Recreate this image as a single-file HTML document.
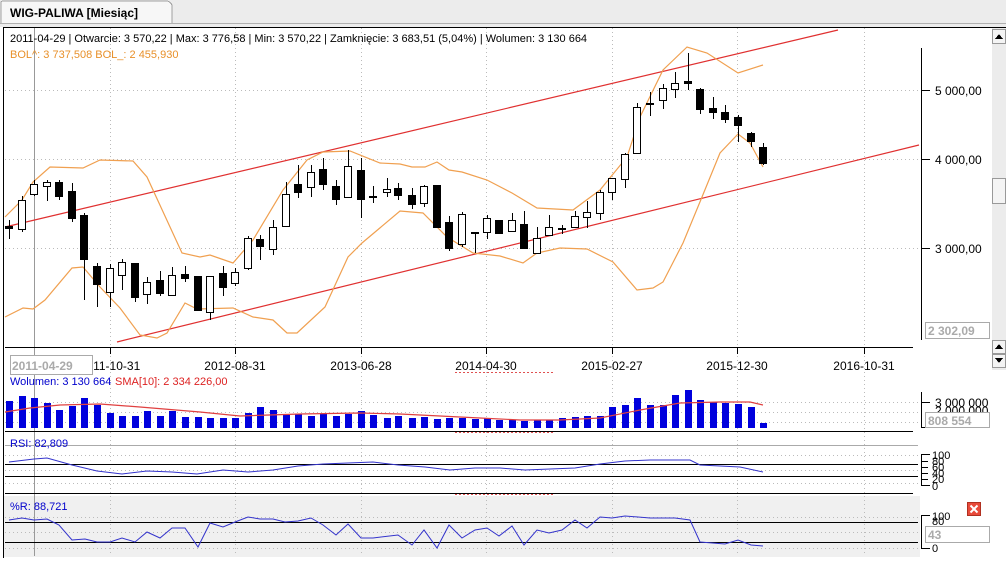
<!DOCTYPE html>
<html><head><meta charset="utf-8"><style>
body{margin:0;width:1006px;height:558px;overflow:hidden;background:#fff;font-family:"Liberation Sans",sans-serif;}
svg text{font-family:"Liberation Sans",sans-serif;}
</style></head><body>
<svg width="1006" height="558" xmlns="http://www.w3.org/2000/svg" shape-rendering="crispEdges">
<rect x="0" y="0" width="1006" height="27" fill="#ececec"/>
<path d="M1 23 V3 Q1 1 3 1 H166 Q170 1 172 5 V23" fill="#f7f7f7" stroke="#a0a0a0"/>
<text x="10" y="17" font-size="12" font-weight="bold" fill="#000">WIG-PALIWA [Miesiąc]</text>
<line x1="0" y1="23.5" x2="1006" y2="23.5" stroke="#b0b0b0"/>
<rect x="3.5" y="27.5" width="1010" height="540" fill="#fff" stroke="#000"/>
<rect x="4" y="496" width="916" height="61" fill="#f0f0f0"/>
<rect x="992" y="28" width="14" height="342" fill="#ececec"/>
<rect x="992.5" y="29.5" width="13" height="14" fill="#f4f4f4" stroke="#999"/>
<path d="M995 39 L999 34 L1003 39Z" fill="#000"/>
<rect x="992.5" y="178.5" width="13" height="25" fill="#f4f4f4" stroke="#999"/>
<rect x="992.5" y="340.5" width="13" height="13" fill="#f4f4f4" stroke="#999"/>
<path d="M995 349 L999 344 L1003 349Z" fill="#000"/>
<rect x="992.5" y="354.5" width="13" height="13" fill="#f4f4f4" stroke="#999"/>
<path d="M995 358 L999 363 L1003 358Z" fill="#000"/>
<g stroke="#bbb" stroke-dasharray="1,3" shape-rendering="crispEdges">
<line x1="5" y1="90.5" x2="918" y2="90.5"/><line x1="5" y1="159.5" x2="918" y2="159.5"/><line x1="5" y1="248.5" x2="918" y2="248.5"/>
<line x1="110.5" y1="28" x2="110.5" y2="556"/><line x1="235.5" y1="28" x2="235.5" y2="556"/><line x1="361.5" y1="28" x2="361.5" y2="556"/><line x1="486.5" y1="28" x2="486.5" y2="556"/><line x1="612.5" y1="28" x2="612.5" y2="556"/><line x1="737.5" y1="28" x2="737.5" y2="556"/><line x1="864.5" y1="28" x2="864.5" y2="556"/>
<line x1="5" y1="402.5" x2="918" y2="402.5"/><line x1="5" y1="412.5" x2="918" y2="412.5"/><line x1="5" y1="422.5" x2="918" y2="422.5"/>
<line x1="5" y1="455.5" x2="918" y2="455.5"/><line x1="5" y1="470.5" x2="918" y2="470.5"/><line x1="5" y1="483.5" x2="918" y2="483.5"/>
<line x1="5" y1="517.5" x2="918" y2="517.5"/><line x1="5" y1="532.5" x2="918" y2="532.5"/><line x1="5" y1="548.5" x2="918" y2="548.5"/>
</g>
<g stroke="#e05050" stroke-dasharray="2,2"><line x1="455" y1="372.5" x2="555" y2="372.5"/><line x1="455" y1="432.5" x2="555" y2="432.5"/><line x1="455" y1="494.5" x2="555" y2="494.5"/></g>
<line x1="34.5" y1="28" x2="34.5" y2="556" stroke="#999"/>
<text x="10" y="42" font-size="11" fill="#000">2011-04-29 | Otwarcie: 3 570,22 | Max: 3 776,58 | Min: 3 570,22 | Zamknięcie: 3 683,51 (5,04%)  | Wolumen: 3 130 664</text>
<text x="10" y="58" font-size="11" fill="#e8902a">BOL^: 3 737,508  BOL_: 2 455,930</text>
<g stroke="#000"><line x1="921.5" y1="48" x2="921.5" y2="340"/><line x1="921" y1="90.5" x2="930" y2="90.5"/><line x1="921" y1="159.5" x2="930" y2="159.5"/><line x1="921" y1="248.5" x2="930" y2="248.5"/></g>
<g font-size="12" fill="#000"><text x="935" y="95">5 000,00</text><text x="935" y="164">4 000,00</text><text x="935" y="253">3 000,00</text></g>
<rect x="925.5" y="322.5" width="64" height="16" fill="#fff" stroke="#aaa"/>
<text x="928" y="335" font-size="12" font-weight="bold" fill="#aaa">2 302,09</text>
<g stroke="#000"><line x1="5" y1="347.5" x2="913" y2="347.5"/>
<line x1="110.5" y1="347" x2="110.5" y2="354"/><line x1="235.5" y1="347" x2="235.5" y2="354"/><line x1="361.5" y1="347" x2="361.5" y2="354"/><line x1="486.5" y1="347" x2="486.5" y2="354"/><line x1="612.5" y1="347" x2="612.5" y2="354"/><line x1="737.5" y1="347" x2="737.5" y2="354"/><line x1="864.5" y1="347" x2="864.5" y2="354"/></g>
<g font-size="12" fill="#000" text-anchor="middle"><text x="110" y="370">2011-10-31</text><text x="235" y="370">2012-08-31</text><text x="361" y="370">2013-06-28</text><text x="486" y="370">2014-04-30</text><text x="612" y="370">2015-02-27</text><text x="737" y="370">2015-12-30</text><text x="864" y="370">2016-10-31</text></g>
<rect x="10.5" y="355.5" width="82" height="19" fill="#fff" stroke="#aaa"/>
<text x="12" y="370" font-size="12" font-weight="bold" fill="#aaa">2011-04-29</text>
<g stroke="#e03030" stroke-width="1.2" shape-rendering="auto"><line x1="5" y1="227" x2="838" y2="30"/><line x1="117" y1="342" x2="919" y2="145"/></g>
<g fill="none" stroke="#f0a050" stroke-width="1.2" shape-rendering="auto">
<polyline points="5,217 22,200 33,182 50,167 83,168 100,160 133,161 147,177 182,253 200,257 210,255 233,263 253,240 283,190 307,160 323,152 350,151 380,163 400,164 412,167 425,167 437,162 449,170 462,172 487,180 512,193 537,208 573,210 600,190 627,157 640,117 663,70 687,47 707,53 738,73 763,65"/>
<polyline points="5,317 23,308 33,309 45,300 72,268 83,267 100,287 120,308 140,335 157,338 167,333 185,303 197,309 233,308 253,317 273,320 287,333 297,333 325,307 348,257 362,243 400,211 423,213 447,237 473,253 500,256 523,263 537,253 560,248 587,249 613,262 637,290 653,288 663,282 683,243 702,197 720,153 738,134 750,143 763,167"/>
</g>
<g id="c" stroke="#000" shape-rendering="crispEdges"></g>
<text x="10" y="385" font-size="11" fill="#0000cc">Wolumen: 3 130 664</text>
<text x="115" y="385" font-size="11" fill="#dd2222">SMA[10]: 2 334 226,00</text>
<g id="v" fill="#0000dd"></g>
<polyline fill="none" stroke="#e04040" stroke-width="1.2" shape-rendering="auto" points="5,412 30,408 60,405 100,404 140,407 200,412 240,416 300,414 360,413 400,414 440,416 480,418 520,420 560,420 600,418 640,410 680,403 720,402 750,402 763,405"/>
<line x1="5" y1="431.5" x2="913" y2="431.5" stroke="#000"/>
<g stroke="#000"><line x1="921.5" y1="392" x2="921.5" y2="428"/><line x1="921" y1="402.5" x2="930" y2="402.5"/><line x1="921" y1="427.5" x2="926" y2="427.5"/></g>
<text x="935" y="407" font-size="12" fill="#000">3 000 000</text>
<text x="935" y="415" font-size="12" fill="#000">2 000 000</text>
<rect x="925.5" y="412.5" width="64" height="15" fill="#fff" stroke="#aaa"/>
<text x="928" y="425" font-size="12" font-weight="bold" fill="#aaa">808 554</text>
<line x1="5" y1="445.5" x2="918" y2="445.5" stroke="#aaa"/>
<text x="10" y="447" font-size="11" fill="#0000cc">RSI: 82,809</text>
<g stroke="#000"><line x1="5" y1="464.5" x2="918" y2="464.5"/><line x1="5" y1="476.5" x2="918" y2="476.5"/><line x1="5" y1="493.5" x2="913" y2="493.5"/>
<line x1="921.5" y1="454" x2="921.5" y2="486"/><line x1="921" y1="454.5" x2="930" y2="454.5"/><line x1="921" y1="461.5" x2="928" y2="461.5"/><line x1="921" y1="467.5" x2="928" y2="467.5"/><line x1="921" y1="473.5" x2="928" y2="473.5"/><line x1="921" y1="479.5" x2="928" y2="479.5"/><line x1="921" y1="485.5" x2="930" y2="485.5"/></g>
<g font-size="11" fill="#000"><text x="932" y="459">100</text><text x="932" y="465">80</text><text x="932" y="471">60</text><text x="932" y="477">40</text><text x="932" y="483">20</text><text x="932" y="490">0</text></g>
<polyline fill="none" stroke="#3333cc" shape-rendering="auto" points="9,462 34,459 47,458 72,465 97,471 122,474 147,471 172,472 197,474 223,470 248,472 273,470 298,466 323,464 348,463 373,462 398,465 425,467 450,470 475,468 500,468 525,470 550,469 575,468 600,464 625,461 650,460 690,460 700,465 740,467 763,472"/>
<text x="10" y="510" font-size="11" fill="#0000cc">%R: 88,721</text>
<g stroke="#000"><line x1="5" y1="522.5" x2="918" y2="522.5"/><line x1="5" y1="542.5" x2="918" y2="542.5"/>
<line x1="921.5" y1="515" x2="921.5" y2="548"/><line x1="921" y1="515.5" x2="930" y2="515.5"/><line x1="921" y1="548.5" x2="930" y2="548.5"/></g>
<g font-size="11" fill="#000"><text x="932" y="520">100</text><text x="932" y="525">80</text><text x="932" y="552">0</text></g>
<rect x="925.5" y="526.5" width="64" height="16" fill="#fff" stroke="#aaa"/>
<text x="928" y="539" font-size="12" font-weight="bold" fill="#aaa">43</text>
<rect x="967.5" y="502.5" width="13" height="13" fill="#e84a3a" stroke="#b03020"/>
<path d="M970.5 505.5 L977.5 512.5 M977.5 505.5 L970.5 512.5" stroke="#fff" stroke-width="2" shape-rendering="auto"/>
<polyline fill="none" stroke="#3333cc" shape-rendering="auto" points="9,520 22,518 34,520 47,519 59,525 72,540 85,539 97,542 110,542 122,538 135,542 147,532 160,538 172,528 185,528 198,547 210,523 223,527 235,522 248,517 260,519 273,519 285,522 298,521 311,518 323,525 336,535 348,524 361,538 373,538 398,535 412,545 424,530 437,548 449,525 462,538 475,530 487,528 499,536 512,526 524,545 537,530 549,533 562,530 575,520 587,528 600,517 612,518 625,516 650,518 675,518 690,520 700,542 725,544 738,540 751,545 763,546"/>
</svg>
<script>
var C=[[9,226,228,220,239,1],[22,200,229,196,232,0],[34,184,194,180,196,0],[47,182,186,180,201,0],[59,182,196,180,200,1],[72,191,218,183,222,1],[84,215,259,213,300,1],[97,266,284,263,307,1],[110,268,292,264,307,0],[122,262,275,259,290,0],[135,263,297,263,302,1],[147,282,294,277,304,0],[160,280,293,271,296,1],[172,275,295,267,296,0],[185,274,278,266,282,1],[198,276,310,276,310,1],[210,276,312,276,320,0],[223,273,287,266,296,1],[235,272,283,268,286,0],[248,238,268,236,270,0],[260,239,246,235,260,1],[273,227,249,220,255,0],[286,194,226,182,227,0],[298,184,192,165,198,1],[311,172,187,165,197,0],[323,169,184,158,190,1],[336,186,199,180,205,1],[348,166,197,150,198,0],[361,170,199,158,218,1],[373,196,197,186,203,1],[387,189,192,178,197,0],[398,188,195,183,200,1],[412,195,204,188,209,1],[424,186,203,185,207,0],[437,185,227,185,227,1],[449,222,248,216,251,1],[462,214,244,212,247,0],[475,232,233,232,253,1],[487,218,232,215,239,0],[499,220,233,220,234,1],[512,220,231,213,232,0],[524,224,248,211,248,1],[537,238,253,227,253,0],[549,227,235,215,235,0],[562,228,229,225,234,1],[575,216,227,211,228,0],[587,212,217,201,228,0],[600,192,213,190,220,0],[612,178,192,178,200,0],[625,154,179,153,188,0],[637,107,153,103,154,0],[650,103,104,92,116,1],[663,88,100,84,109,0],[675,83,89,72,98,0],[688,81,83,53,90,1],[700,89,109,88,114,1],[713,108,112,97,119,1],[725,112,119,105,123,1],[738,117,125,115,142,1],[751,133,141,132,147,1],[763,147,163,143,165,1]];
var s='';C.forEach(function(c){var x=c[0];s+='<line x1="'+(x+.5)+'" y1="'+c[3]+'" x2="'+(x+.5)+'" y2="'+c[4]+'"/>';var h=Math.max(1,c[2]-c[1]);s+='<rect x="'+(x-3.5)+'" y="'+(c[1]+.5)+'" width="7" height="'+h+'" fill="'+(c[5]?'#000':'#fff')+'"/>';});
document.getElementById('c').innerHTML=s;
var V=[401,396,398,403,410,406,398,405,413,416,416,411,416,411,417,417,418,418,418,413,407,410,415,414,416,414,416,414,411,415,418,416,
418,417,419,418,418,419,418,420,420,421,420,420,418,417,416,416,
407,405,398,405,405,395,390,400,402,403,404,407,423];
var t='';for(var i=0;i<C.length;i++){var x=C[i][0];var y=V[i];t+='<rect x="'+(x-3)+'" y="'+y+'" width="7" height="'+(428-y)+'"/>';}
document.getElementById('v').innerHTML=t;
</script>
</body></html>
